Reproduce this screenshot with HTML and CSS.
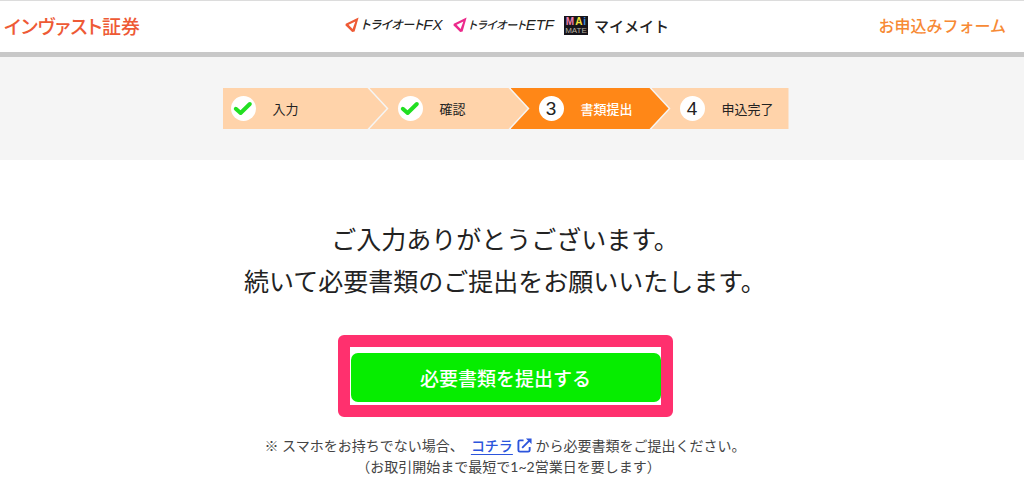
FILE: index.html
```html
<!DOCTYPE html>
<html lang="ja">
<head>
<meta charset="utf-8">
<meta name="viewport" content="width=device-width, initial-scale=1">
<title>お申込みフォーム</title>
<link rel="stylesheet" href="styles.css">
</head>
<body>
<header class="header">
  <div class="company">インヴァスト証券</div>
  <div class="brands">
    <span class="brand brand-fx">
      <svg class="brand-mark" viewBox="0 0 14 16" aria-hidden="true"><path d="M13.6.6 9.6 14.6 7.2 15 .4 8.2.8 6.8Z"/><path class="inner" d="M10.4 4.4 7.6 12 3.6 7.8Z"/></svg>
      <span class="brand-name"><span class="kana">トライオート</span><span class="latin">FX</span></span>
    </span>
    <span class="brand brand-etf">
      <svg class="brand-mark" viewBox="0 0 14 16" aria-hidden="true"><path d="M13.6.6 9.6 14.6 7.2 15 .4 8.2.8 6.8Z"/><path class="inner" d="M10.4 4.4 7.6 12 3.6 7.8Z"/></svg>
      <span class="brand-name"><span class="kana">トライオート</span><span class="latin">ETF</span></span>
    </span>
    <span class="brand brand-mai">
      <span class="mai-box">
        <span class="mai-top"><b class="m">M</b><b class="a">A</b><b class="i">i</b></span>
        <span class="mai-bottom">MATE</span>
      </span>
      <span class="mai-name">マイメイト</span>
    </span>
  </div>
  <div class="form-title">お申込みフォーム</div>
</header>

<nav class="progress" aria-label="申込みの流れ">
  <ol class="steps">
    <li class="step first">
      <span class="badge"><svg class="check" viewBox="0 0 24 24" aria-hidden="true"><path d="M4.8 11.8 9.6 16 18.8 7"/></svg></span>
      <span>入力</span>
    </li>
    <li class="step">
      <span class="badge"><svg class="check" viewBox="0 0 24 24" aria-hidden="true"><path d="M4.8 11.8 9.6 16 18.8 7"/></svg></span>
      <span>確認</span>
    </li>
    <li class="step current" aria-current="step"><span class="badge">3</span><span>書類提出</span></li>
    <li class="step last"><span class="badge">4</span><span>申込完了</span></li>
  </ol>
</nav>

<main class="main">
  <h1 class="message">ご入力ありがとうございます。<br>続いて必要書類のご提出をお願いいたします。</h1>
  <div class="highlight"><button class="submit" type="button">必要書類を提出する</button></div>
  <p class="note">※ スマホをお持ちでない場合、&nbsp;
    <a class="link" href="#"><span class="link-text">コチラ</span><svg class="external" viewBox="0 0 16 16" aria-hidden="true"><path d="M7 2.5H3Q1.5 2.5 1.5 4V13Q1.5 14.5 3 14.5H12Q13.5 14.5 13.5 13V9.5M5.5 10.5 14 2"/><path class="head" d="M9.5 .5H15.5V6.5Z"/></svg></a>
    から必要書類をご提出ください。<br>　（お取引開始まで最短で1~2営業日を要します）</p>
</main>
</body>
</html>
```
FILE: styles.css
```css
* {
  box-sizing: border-box;
}

body {
  margin: 0;
  background: #fff;
  color: #222;
  font-family: Lato, "Noto Sans CJK JP", sans-serif;
}

.header {
  display: grid;
  grid-template-columns: 1fr auto 1fr;
  align-items: center;
  height: 57px;
  padding: 0 14px 3px 4px;
  border-top: 1px solid #dcdcdc;
  border-bottom: 5px solid #c8c8c8;
}

.company {
  color: #ee5a35;
  font-size: 19px;
  font-weight: 500;
  font-feature-settings: "palt";
}

.brands {
  display: flex;
  align-items: center;
  gap: 10px;
}

.brand {
  display: flex;
  align-items: center;
  gap: 2px;
}

.brand-mark {
  width: 14px;
  height: 16px;
  fill: #ee5a35;
}

.brand-etf .brand-mark {
  fill: #ec2a8b;
}

.brand-mark .inner {
  fill: #fff;
}

.brand-name {
  display: flex;
  align-items: center;
  color: #222;
  font-style: italic;
  line-height: 16px;
}

.kana {
  font-size: 12px;
  font-weight: 500;
  font-feature-settings: "palt";
}

.brand-etf .kana {
  font-size: 11px;
}

.latin {
  font-family: "Liberation Sans", sans-serif;
  font-size: 15px;
}

.brand-mai {
  gap: 6px;
}

.mai-box {
  display: flex;
  flex-direction: column;
  align-items: center;
  width: 24px;
  height: 19px;
  background: #16141a;
  font-family: "Liberation Sans", sans-serif;
}

.mai-top {
  display: flex;
  gap: 1px;
  font-size: 10px;
  line-height: 11px;
}

.mai-top .m {
  color: #f283b0;
}

.mai-top .a {
  color: #f4e23c;
}

.mai-top .i {
  color: #3c8ee0;
}

.mai-bottom {
  color: #b9b2a2;
  font-size: 8px;
  line-height: 7px;
}

.mai-name {
  color: #222;
  font-size: 15px;
  font-weight: 500;
}

.form-title {
  justify-self: end;
  padding-right: 4px;
  color: #f78a35;
  font-size: 16px;
  font-weight: 500;
}

.progress {
  display: flex;
  justify-content: center;
  padding: 31px 17px 31px 4px;
  background: #f5f5f5;
}

.steps {
  display: flex;
  margin: 0;
  padding: 0;
  list-style: none;
}

.step {
  display: flex;
  align-items: center;
  gap: 17px;
  width: 158px;
  height: 41px;
  margin-left: -17px;
  padding-left: 28px;
  background: #ffd3aa;
  font-size: 13px;
  clip-path: polygon(0 0, calc(100% - 19px) 0, 100% 50%, calc(100% - 19px) 100%, 0 100%, 19px 50%);
}

.step.first {
  width: 164px;
  margin-left: 0;
  padding-left: 8px;
  clip-path: polygon(0 0, calc(100% - 19px) 0, 100% 50%, calc(100% - 19px) 100%, 0 100%);
}

.step.current {
  background: #ff8717;
  color: #fff;
  font-weight: 500;
}

.step.last {
  width: 137px;
  clip-path: polygon(0 0, 100% 0, 100% 100%, 0 100%, 19px 50%);
}

.badge {
  display: flex;
  align-items: center;
  justify-content: center;
  width: 25px;
  height: 25px;
  border-radius: 50%;
  background: #fff;
  color: #222;
  font-family: "Liberation Sans", sans-serif;
  font-size: 19px;
  font-weight: 400;
}

.check {
  width: 24px;
  height: 24px;
  fill: none;
  stroke: #22df22;
  stroke-width: 4;
  stroke-linecap: round;
  stroke-linejoin: round;
}

.main {
  display: flex;
  flex-direction: column;
  align-items: center;
  padding: 58px 14px 20px 0;
  text-align: center;
}

.message {
  margin: 0 0 33px;
  font-size: 25px;
  font-weight: 400;
  line-height: 42px;
}

.highlight {
  padding: 6px 0 3px 1px;
  border: 12px solid #ff306e;
  border-radius: 6px;
}

.submit {
  display: block;
  width: 310px;
  height: 49px;
  padding: 0;
  border: 0;
  border-radius: 7px;
  background: #06ed00;
  color: #fff;
  font-family: "Noto Sans CJK JP", sans-serif;
  font-size: 19px;
  font-weight: 500;
}

.note {
  margin: 18px 0 0;
  color: #444;
  font-size: 14px;
  line-height: 21px;
}

.link {
  color: #2c55dc;
  font-weight: 500;
  text-decoration: none;
}

.link-text {
  text-decoration: underline;
  text-underline-offset: 3px;
}

.external {
  width: 15px;
  height: 15px;
  margin-left: 4px;
  vertical-align: -2px;
  fill: none;
  stroke: currentColor;
  stroke-width: 2;
}

.external .head {
  fill: currentColor;
  stroke: none;
}
```
